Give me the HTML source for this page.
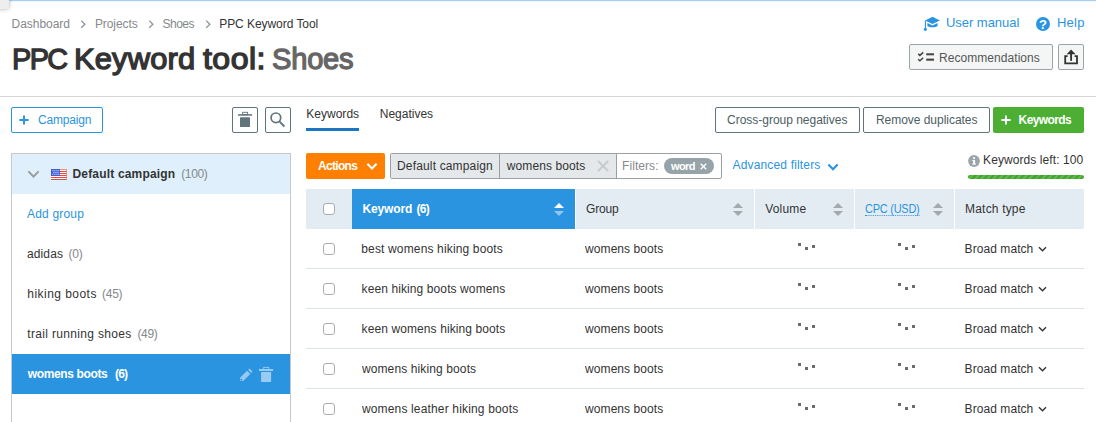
<!DOCTYPE html>
<html lang="en">
<head>
<meta charset="utf-8">
<title>PPC Keyword tool: Shoes</title>
<style>
html,body{margin:0;padding:0;background:#fff;}
body{width:1096px;height:422px;overflow:hidden;position:relative;font-family:"Liberation Sans",sans-serif;font-size:12px;color:#333;}
.abs{position:absolute;white-space:nowrap;}
.t{position:absolute;white-space:nowrap;line-height:16px;height:16px;}
.btn{position:absolute;box-sizing:border-box;border-radius:2px;white-space:nowrap;}
.line{position:absolute;background:#dde4e7;height:1px;}
.cb{position:absolute;box-sizing:border-box;width:12px;height:12px;border:1px solid #a9adb0;border-radius:3px;background:#fff;}
.th{position:absolute;top:189px;height:40px;background:#e4ecf3;}
.dot{position:absolute;width:3px;height:3px;background:#6b6b6b;}
</style>
</head>
<body>
<!-- top accents -->
<div class="abs" style="left:0;top:0;width:1096px;height:1px;background:#a3d1f1;"></div>
<div class="abs" style="left:0;top:1px;width:1096px;height:1px;background:#f1f8fd;"></div>
<div class="abs" style="left:-3px;top:-3px;width:11.5px;height:11.5px;background:#eeeeee;border-radius:0 0 3px 0;box-shadow:0 0 4px rgba(0,0,0,.32);"></div>
<!-- breadcrumbs -->
<svg class="abs" style="left:79.5px;top:19px;" width="8" height="10" viewBox="0 0 8 10"><path d="M1.2 1.6 L4.9 5.2 L1.2 8.8" fill="none" stroke="#8f9396" stroke-width="1.3"/></svg>
<svg class="abs" style="left:147.6px;top:19px;" width="8" height="10" viewBox="0 0 8 10"><path d="M1.2 1.6 L4.9 5.2 L1.2 8.8" fill="none" stroke="#8f9396" stroke-width="1.3"/></svg>
<svg class="abs" style="left:204.6px;top:19px;" width="8" height="10" viewBox="0 0 8 10"><path d="M1.2 1.6 L4.9 5.2 L1.2 8.8" fill="none" stroke="#8f9396" stroke-width="1.3"/></svg>
<!-- top right links -->
<svg class="abs" style="left:923px;top:16px;" width="18" height="16" viewBox="0 0 18 16">
  <path d="M9.5 0.8 L16.9 4.4 L9.5 8 L2.1 4.4 Z" fill="#2b94e1"/>
  <path d="M4.4 6.9 L9.5 9.4 L14.6 6.9 L14.6 9.9 C13 11.8 6 11.8 4.4 9.9 Z" fill="#2b94e1"/>
  <path d="M2.4 4.6 L2.4 12.4" stroke="#2b94e1" stroke-width="1.1" fill="none"/>
  <circle cx="2.4" cy="13.3" r="1.6" fill="#2b94e1"/>
</svg>
<svg class="abs" style="left:1036px;top:16.8px;" width="14" height="14" viewBox="0 0 14 14">
  <circle cx="7" cy="7" r="7" fill="#2b94e1"/>
  <text x="7.1" y="11.7" font-family="Liberation Sans, sans-serif" font-size="13" font-weight="bold" fill="#fff" text-anchor="middle">?</text>
</svg>
<!-- recommendations + share -->
<div class="btn" style="left:909px;top:44px;width:144px;height:26px;background:#f4f5f5;border:1px solid #9ba5a9;"></div>
<svg class="abs" style="left:917px;top:51px;" width="18" height="12" viewBox="0 0 18 12">
  <path d="M1.2 2.9 L2.9 4.4 L6.2 1.4" fill="none" stroke="#444" stroke-width="1.5"/>
  <path d="M1.2 8.3 L2.9 9.8 L6.2 6.8" fill="none" stroke="#444" stroke-width="1.5"/>
  <rect x="9.2" y="2.3" width="7.8" height="2" fill="#444"/>
  <rect x="9.2" y="7.6" width="7.8" height="2.1" fill="#444"/>
</svg>
<div class="btn" style="left:1058px;top:44px;width:26px;height:26px;background:#f4f5f5;border:1px solid #9ba5a9;"></div>
<svg class="abs" style="left:1063px;top:48px;" width="16" height="18" viewBox="0 0 16 18">
  <path d="M4.6 8.1 L2.2 8.1 L2.2 15.3 L14 15.3 L14 8.1 L11.6 8.1" fill="none" stroke="#333" stroke-width="1.8"/>
  <path d="M8.1 12.8 L8.1 4.5" fill="none" stroke="#333" stroke-width="1.9"/>
  <path d="M8.1 1.4 L12.6 6.3 L3.6 6.3 Z" fill="#333"/>
</svg>
<!-- divider -->
<div class="line" style="left:0;top:96px;width:1096px;background:#d4d8da;"></div>
<!-- left column -->
<div class="btn" style="left:11px;top:107px;width:92px;height:26px;background:#fff;border:1px solid #2b94e1;"></div>
<svg class="abs" style="left:19px;top:115px;" width="10" height="10" viewBox="0 0 10 10"><path d="M5 0.4 V9.6 M0.4 5 H9.6" stroke="#2b94e1" stroke-width="1.9" fill="none"/></svg>
<div class="btn" style="left:232px;top:107px;width:26px;height:26px;background:#fff;border:1px solid #60747c;"></div>
<svg class="abs" style="left:237px;top:111px;" width="16" height="17" viewBox="0 0 16 17">
  <rect x="5.6" y="1.3" width="5" height="2.4" fill="none" stroke="#60747c" stroke-width="0.9"/>
  <rect x="0.9" y="3.2" width="14.2" height="1.5" fill="#60747c"/>
  <rect x="3" y="6.2" width="10" height="9.8" rx="0.5" fill="#60747c"/>
</svg>
<div class="btn" style="left:265px;top:107px;width:26px;height:26px;background:#fff;border:1px solid #60747c;"></div>
<svg class="abs" style="left:269px;top:111px;" width="18" height="18" viewBox="0 0 18 18">
  <circle cx="6.9" cy="6.8" r="4.8" fill="none" stroke="#60747c" stroke-width="1.7"/>
  <path d="M10.4 10.4 L15.4 15.5" stroke="#60747c" stroke-width="1.9" fill="none"/>
</svg>
<!-- campaign panel -->
<div class="abs" style="left:11px;top:153px;width:280px;height:280px;box-sizing:border-box;border:1px solid #c6c9cb;background:#fff;"></div>
<div class="abs" style="left:12px;top:154px;width:278px;height:40px;background:#dff0fc;"></div>
<svg class="abs" style="left:27px;top:170px;" width="13" height="9" viewBox="0 0 13 9"><path d="M1.4 1.4 L6.5 6.6 L11.6 1.4" fill="none" stroke="#999" stroke-width="1.9"/></svg>
<!-- flag -->
<svg class="abs" style="left:51px;top:169px;" width="16" height="11" viewBox="0 0 16 11">
  <rect x="0" y="0" width="16" height="11" fill="#fff"/>
  <rect x="0" y="2" width="16" height="1" fill="#f2473f"/><rect x="0" y="4" width="16" height="1" fill="#f2473f"/><rect x="0" y="6" width="16" height="1" fill="#f2473f"/><rect x="0" y="8" width="16" height="1" fill="#f2473f"/>
  <rect x="0" y="0" width="16" height="1" fill="#d99a92"/>
  <rect x="0" y="10" width="16" height="1" fill="#c9563f"/>
  <rect x="15.3" y="0" width="0.7" height="11" fill="#c98a7a"/>
  <rect x="0" y="0" width="9" height="7" fill="#3f5fd6"/>
  <g fill="#e8edfb"><rect x="1.4" y="1.2" width="1" height="1"/><rect x="3.4" y="1.2" width="1" height="1"/><rect x="5.4" y="1.2" width="1" height="1"/><rect x="7.2" y="1.2" width="1" height="1"/><rect x="2.4" y="3" width="1" height="1"/><rect x="4.4" y="3" width="1" height="1"/><rect x="6.4" y="3" width="1" height="1"/><rect x="1.4" y="4.8" width="1" height="1"/><rect x="3.4" y="4.8" width="1" height="1"/><rect x="5.4" y="4.8" width="1" height="1"/><rect x="7.2" y="4.8" width="1" height="1"/></g>
</svg>
<div class="abs" style="left:12px;top:354px;width:278px;height:40px;background:#2b94e1;"></div>
<svg class="abs" style="left:239px;top:368px;" width="14" height="14" viewBox="0 0 14 14">
  <path d="M1 12.9 L1.2 9.6 L8.1 2.7 L11.3 5.9 L4.4 12.8 Z" fill="#96c9f0"/>
  <path d="M9.1 1.8 L10.5 0.5 L13.5 3.5 L12.2 4.9 Z" fill="#96c9f0"/>
  <circle cx="2.3" cy="11.7" r="0.9" fill="#2b94e1"/>
</svg>
<svg class="abs" style="left:258px;top:366px;" width="16" height="17" viewBox="0 0 16 17">
  <rect x="5.7" y="1.4" width="5" height="2.2" fill="none" stroke="#9acbf1" stroke-width="0.9"/>
  <rect x="1" y="3" width="14.1" height="2" fill="#9acbf1"/>
  <rect x="3.1" y="6" width="10" height="10" rx="0.4" fill="#9acbf1"/>
</svg>
<!-- tabs -->
<div class="abs" style="left:306px;top:128px;width:53px;height:3px;background:#1b76c4;"></div>
<!-- right buttons -->
<div class="btn" style="left:715px;top:107px;width:145px;height:26px;background:#fff;border:1px solid #60747c;"></div>
<div class="btn" style="left:863px;top:107px;width:127px;height:26px;background:#fff;border:1px solid #60747c;"></div>
<div class="btn" style="left:993px;top:107px;width:91px;height:26px;background:#4cae33;"></div>
<svg class="abs" style="left:1001px;top:115px;" width="10" height="10" viewBox="0 0 10 10"><path d="M5 0.4 V9.6 M0.4 5 H9.6" stroke="#fff" stroke-width="1.9" fill="none"/></svg>
<!-- actions row -->
<div class="btn" style="left:306px;top:153px;width:79px;height:26px;background:#ff8000;"></div>
<svg class="abs" style="left:366px;top:162px;" width="12" height="9" viewBox="0 0 12 9"><path d="M1.4 1.7 L6 6.4 L10.6 1.7" fill="none" stroke="#fff" stroke-width="2.1"/></svg>
<div class="abs" style="left:390px;top:153px;width:332px;height:26px;box-sizing:border-box;border:1px solid #9aa0a3;border-radius:2px;background:#fff;"></div>
<div class="abs" style="left:391px;top:154px;width:225px;height:24px;background:#e4e8ea;"></div>
<div class="abs" style="left:499px;top:154px;width:1px;height:24px;background:#9aa0a3;"></div>
<div class="abs" style="left:616px;top:154px;width:1px;height:24px;background:#9aa0a3;"></div>
<svg class="abs" style="left:597px;top:160px;" width="12" height="12" viewBox="0 0 12 12"><path d="M1 1 L11.2 11.2 M11.2 1 L1 11.2" stroke="#c6cacc" stroke-width="1.9" fill="none"/></svg>
<div class="abs" style="left:664px;top:158px;width:50px;height:16px;border-radius:8px;background:#96a4a9;"></div>
<svg class="abs" style="left:700px;top:163px;" width="7" height="7" viewBox="0 0 7 7"><path d="M0.7 0.7 L6.2 6.2 M6.2 0.7 L0.7 6.2" stroke="#fff" stroke-width="1.4" fill="none"/></svg>
<svg class="abs" style="left:826.6px;top:162.6px;" width="12" height="9" viewBox="0 0 12 9"><path d="M1.4 1.6 L6 6.3 L10.6 1.6" fill="none" stroke="#2b94e1" stroke-width="2.1"/></svg>
<!-- keywords left -->
<svg class="abs" style="left:968px;top:155px;" width="12" height="12" viewBox="0 0 12 12">
  <circle cx="6" cy="6" r="5.9" fill="#9aa5a9"/>
  <rect x="5.2" y="5" width="1.9" height="4.4" fill="#fff"/>
  <rect x="5.1" y="2.2" width="1.9" height="1.8" fill="#fff"/>
  <rect x="4.2" y="5" width="1.2" height="0.9" fill="#fff"/>
  <rect x="4.2" y="8.6" width="3.9" height="0.9" fill="#fff"/>
</svg>
<div class="abs" style="left:968px;top:175px;width:116px;height:4px;border-radius:2px;background:repeating-linear-gradient(135deg,#41a62b 0,#41a62b 2.2px,#5db947 2.2px,#5db947 4.3px);"></div>
<!-- table header -->
<div class="th" style="left:306px;width:46px;"></div>
<div class="th" style="left:352px;width:223px;background:#2b94e1;"></div>
<div class="th" style="left:576px;width:178px;"></div>
<div class="th" style="left:755px;width:99px;"></div>
<div class="th" style="left:855px;width:99px;"></div>
<div class="th" style="left:955px;width:129px;"></div>
<div class="cb" style="left:323px;top:203px;"></div>
<!-- sort icons -->
<svg class="abs" style="left:554px;top:203px;" width="10" height="13" viewBox="0 0 10 13"><path d="M0 5.1 L5 0.1 L10 5.1 Z" fill="#fff"/><path d="M0 7.9 L5 12.9 L10 7.9 Z" fill="#8ec6f0"/></svg>
<svg class="abs" style="left:733px;top:203px;" width="10" height="13" viewBox="0 0 10 13"><path d="M0 5.1 L5 0.1 L10 5.1 Z" fill="#a3aaae"/><path d="M0 7.9 L5 12.9 L10 7.9 Z" fill="#a3aaae"/></svg>
<svg class="abs" style="left:833px;top:203px;" width="10" height="13" viewBox="0 0 10 13"><path d="M0 5.1 L5 0.1 L10 5.1 Z" fill="#a3aaae"/><path d="M0 7.9 L5 12.9 L10 7.9 Z" fill="#a3aaae"/></svg>
<svg class="abs" style="left:933px;top:203px;" width="10" height="13" viewBox="0 0 10 13"><path d="M0 5.1 L5 0.1 L10 5.1 Z" fill="#a3aaae"/><path d="M0 7.9 L5 12.9 L10 7.9 Z" fill="#a3aaae"/></svg>
<!-- rows -->
<div class="cb" style="left:323px;top:243px;"></div>
<div class="dot" style="left:798px;top:243px;"></div><div class="dot" style="left:805px;top:246.5px;"></div><div class="dot" style="left:812px;top:245px;"></div>
<div class="dot" style="left:898px;top:243px;"></div><div class="dot" style="left:905px;top:246.5px;"></div><div class="dot" style="left:912px;top:245px;"></div>
<svg class="abs" style="left:1038px;top:246px;" width="9" height="7" viewBox="0 0 9 7"><path d="M1 1.2 L4.5 4.8 L8 1.2" fill="none" stroke="#333" stroke-width="1.4"/></svg>
<div class="line" style="left:306px;top:268px;width:778px;"></div>
<div class="cb" style="left:323px;top:283px;"></div>
<div class="dot" style="left:798px;top:283px;"></div><div class="dot" style="left:805px;top:286.5px;"></div><div class="dot" style="left:812px;top:285px;"></div>
<div class="dot" style="left:898px;top:283px;"></div><div class="dot" style="left:905px;top:286.5px;"></div><div class="dot" style="left:912px;top:285px;"></div>
<svg class="abs" style="left:1038px;top:286px;" width="9" height="7" viewBox="0 0 9 7"><path d="M1 1.2 L4.5 4.8 L8 1.2" fill="none" stroke="#333" stroke-width="1.4"/></svg>
<div class="line" style="left:306px;top:308px;width:778px;"></div>
<div class="cb" style="left:323px;top:323px;"></div>
<div class="dot" style="left:798px;top:323px;"></div><div class="dot" style="left:805px;top:326.5px;"></div><div class="dot" style="left:812px;top:325px;"></div>
<div class="dot" style="left:898px;top:323px;"></div><div class="dot" style="left:905px;top:326.5px;"></div><div class="dot" style="left:912px;top:325px;"></div>
<svg class="abs" style="left:1038px;top:326px;" width="9" height="7" viewBox="0 0 9 7"><path d="M1 1.2 L4.5 4.8 L8 1.2" fill="none" stroke="#333" stroke-width="1.4"/></svg>
<div class="line" style="left:306px;top:348px;width:778px;"></div>
<div class="cb" style="left:323px;top:363px;"></div>
<div class="dot" style="left:798px;top:363px;"></div><div class="dot" style="left:805px;top:366.5px;"></div><div class="dot" style="left:812px;top:365px;"></div>
<div class="dot" style="left:898px;top:363px;"></div><div class="dot" style="left:905px;top:366.5px;"></div><div class="dot" style="left:912px;top:365px;"></div>
<svg class="abs" style="left:1038px;top:366px;" width="9" height="7" viewBox="0 0 9 7"><path d="M1 1.2 L4.5 4.8 L8 1.2" fill="none" stroke="#333" stroke-width="1.4"/></svg>
<div class="line" style="left:306px;top:388px;width:778px;"></div>
<div class="cb" style="left:323px;top:403px;"></div>
<div class="dot" style="left:798px;top:403px;"></div><div class="dot" style="left:805px;top:406.5px;"></div><div class="dot" style="left:812px;top:405px;"></div>
<div class="dot" style="left:898px;top:403px;"></div><div class="dot" style="left:905px;top:406.5px;"></div><div class="dot" style="left:912px;top:405px;"></div>
<svg class="abs" style="left:1038px;top:406px;" width="9" height="7" viewBox="0 0 9 7"><path d="M1 1.2 L4.5 4.8 L8 1.2" fill="none" stroke="#333" stroke-width="1.4"/></svg>
<!-- texts -->
<div class="t" id="bc1" style="left:11.60px;top:15.84px;color:#85898c;letter-spacing:-0.041px;">Dashboard</div>
<div class="t" id="bc2" style="left:94.90px;top:15.84px;color:#85898c;letter-spacing:-0.078px;">Projects</div>
<div class="t" id="bc3" style="left:162.40px;top:15.84px;color:#85898c;letter-spacing:-0.456px;">Shoes</div>
<div class="t" id="bc4" style="left:219.20px;top:15.84px;color:#333;letter-spacing:-0.052px;">PPC Keyword Tool</div>
<h1 style="margin:0;font:inherit;"><span class="t" id="ttl1" style="left:11.78px;top:50.61px;color:#333;font-size:30px;letter-spacing:-1.593px;transform:scaleX(0.96);transform-origin:0 0;-webkit-text-stroke:1.3px #333;">PPC</span> <span class="t" id="ttl2" style="left:73.74px;top:50.61px;color:#333;font-size:30px;letter-spacing:0.158px;transform:scaleX(1.03);transform-origin:0 0;-webkit-text-stroke:1.3px #333;">Keyword</span> <span class="t" id="ttl3" style="left:203.10px;top:50.61px;color:#333;font-size:30px;letter-spacing:0.426px;transform:scaleX(1.07);transform-origin:0 0;-webkit-text-stroke:1.3px #333;">tool:</span> <span class="t" id="ttl4" style="left:272.43px;top:50.61px;color:#666;font-size:30px;letter-spacing:-0.225px;transform:scaleX(0.97);transform-origin:0 0;-webkit-text-stroke:1.3px #666;">Shoes</span></h1>
<div class="t" id="um" style="left:945.90px;top:14.50px;color:#2b94e1;font-size:13px;letter-spacing:-0.021px;">User manual</div>
<div class="t" id="help" style="left:1057.00px;top:14.50px;color:#2b94e1;font-size:13px;letter-spacing:0.231px;">Help</div>
<div class="t" id="rec" style="left:939.00px;top:49.84px;color:#555;letter-spacing:0.054px;">Recommendations</div>
<div class="t" id="camp" style="left:37.90px;top:111.84px;color:#2b94e1;letter-spacing:-0.160px;">Campaign</div>
<div class="t" id="dc" style="left:72.50px;top:165.84px;color:#333;font-weight:bold;letter-spacing:0.174px;">Default campaign</div>
<div class="t" id="dcn" style="left:181.20px;top:165.84px;color:#85898c;letter-spacing:-0.354px;">(100)</div>
<div class="t" id="addg" style="left:27.10px;top:205.84px;color:#2b94e1;letter-spacing:0.175px;">Add group</div>
<div class="t" id="g1" style="left:27.10px;top:245.84px;color:#333;letter-spacing:0.088px;">adidas</div>
<div class="t" id="g1n" style="left:68.60px;top:245.84px;color:#85898c;letter-spacing:-0.285px;">(0)</div>
<div class="t" id="g2" style="left:27.30px;top:285.84px;color:#333;letter-spacing:0.460px;">hiking boots</div>
<div class="t" id="g2n" style="left:101.90px;top:285.84px;color:#85898c;letter-spacing:-0.215px;">(45)</div>
<div class="t" id="g3" style="left:27.30px;top:325.84px;color:#333;letter-spacing:0.330px;">trail running shoes</div>
<div class="t" id="g3n" style="left:137.50px;top:325.84px;color:#85898c;letter-spacing:-0.381px;">(49)</div>
<div class="t" id="g4" style="left:27.80px;top:365.84px;color:#fff;font-weight:bold;letter-spacing:-0.367px;">womens boots</div>
<div class="t" id="g4n" style="left:115.00px;top:365.84px;color:#fff;font-weight:bold;letter-spacing:-0.785px;">(6)</div>
<div class="t" id="tab1" style="left:306.20px;top:105.84px;color:#333;letter-spacing:0.030px;">Keywords</div>
<div class="t" id="tab2" style="left:379.80px;top:105.84px;color:#333;letter-spacing:-0.008px;">Negatives</div>
<div class="t" id="cgn" style="left:727.10px;top:111.84px;color:#4c5d64;letter-spacing:-0.021px;">Cross-group negatives</div>
<div class="t" id="rd" style="left:875.90px;top:111.84px;color:#4c5d64;letter-spacing:-0.028px;">Remove duplicates</div>
<div class="t" id="kwb" style="left:1018.60px;top:111.84px;color:#fff;font-weight:bold;letter-spacing:-0.597px;">Keywords</div>
<div class="t" id="act" style="left:318.00px;top:157.84px;color:#fff;font-weight:bold;letter-spacing:-0.688px;">Actions</div>
<div class="t" id="tdc" style="left:397.00px;top:157.84px;color:#333;letter-spacing:0.159px;">Default campaign</div>
<div class="t" id="twb" style="left:506.80px;top:157.84px;color:#333;letter-spacing:0.093px;">womens boots</div>
<div class="t" id="fil" style="left:622.00px;top:157.84px;color:#85898c;letter-spacing:0.076px;">Filters:</div>
<div class="t" id="word" style="left:671.00px;top:158.19px;color:#fff;font-size:11px;font-weight:bold;letter-spacing:-0.619px;">word</div>
<div class="t" id="adv" style="left:732.50px;top:156.84px;color:#2b94e1;letter-spacing:0.162px;">Advanced filters</div>
<div class="t" id="kl" style="left:983.10px;top:151.84px;color:#333;letter-spacing:0.080px;">Keywords left: 100</div>
<div class="t" id="hkw" style="left:362.40px;top:200.84px;color:#fff;font-weight:bold;letter-spacing:-0.125px;">Keyword</div>
<div class="t" id="hkwn" style="left:416.50px;top:200.84px;color:#fff;font-weight:bold;letter-spacing:-0.685px;">(6)</div>
<div class="t" id="hgr" style="left:586.00px;top:200.84px;color:#333;letter-spacing:-0.194px;">Group</div>
<div class="t" id="hvol" style="left:765.30px;top:200.84px;color:#333;letter-spacing:0.150px;">Volume</div>
<div class="t" id="hcpc" style="left:865.40px;top:200.84px;color:#2b94e1;letter-spacing:-0.237px;transform:scaleX(0.91);transform-origin:0 0;border-bottom:1px dotted #2b94e1;height:14px;">CPC (USD)</div>
<div class="t" id="hmt" style="left:965.10px;top:200.84px;color:#333;letter-spacing:0.176px;">Match type</div>
<div class="t" id="r0k" style="left:361.30px;top:240.84px;color:#333;letter-spacing:0.149px;">best womens hiking boots</div>
<div class="t" id="r0g" style="left:585.10px;top:240.84px;color:#333;letter-spacing:0.066px;">womens boots</div>
<div class="t" id="r0m" style="left:964.60px;top:240.84px;color:#333;letter-spacing:0.064px;">Broad match</div>
<div class="t" id="r1k" style="left:361.60px;top:280.84px;color:#333;letter-spacing:0.099px;">keen hiking boots womens</div>
<div class="t" id="r1g" style="left:585.10px;top:280.84px;color:#333;letter-spacing:0.066px;">womens boots</div>
<div class="t" id="r1m" style="left:964.60px;top:280.84px;color:#333;letter-spacing:0.064px;">Broad match</div>
<div class="t" id="r2k" style="left:361.60px;top:320.84px;color:#333;letter-spacing:0.099px;">keen womens hiking boots</div>
<div class="t" id="r2g" style="left:585.10px;top:320.84px;color:#333;letter-spacing:0.066px;">womens boots</div>
<div class="t" id="r2m" style="left:964.60px;top:320.84px;color:#333;letter-spacing:0.064px;">Broad match</div>
<div class="t" id="r3k" style="left:361.90px;top:360.84px;color:#333;letter-spacing:0.119px;">womens hiking boots</div>
<div class="t" id="r3g" style="left:585.10px;top:360.84px;color:#333;letter-spacing:0.066px;">womens boots</div>
<div class="t" id="r3m" style="left:964.60px;top:360.84px;color:#333;letter-spacing:0.064px;">Broad match</div>
<div class="t" id="r4k" style="left:361.90px;top:400.84px;color:#333;letter-spacing:0.162px;">womens leather hiking boots</div>
<div class="t" id="r4g" style="left:585.10px;top:400.84px;color:#333;letter-spacing:0.066px;">womens boots</div>
<div class="t" id="r4m" style="left:964.60px;top:400.84px;color:#333;letter-spacing:0.064px;">Broad match</div>
</body>
</html>
